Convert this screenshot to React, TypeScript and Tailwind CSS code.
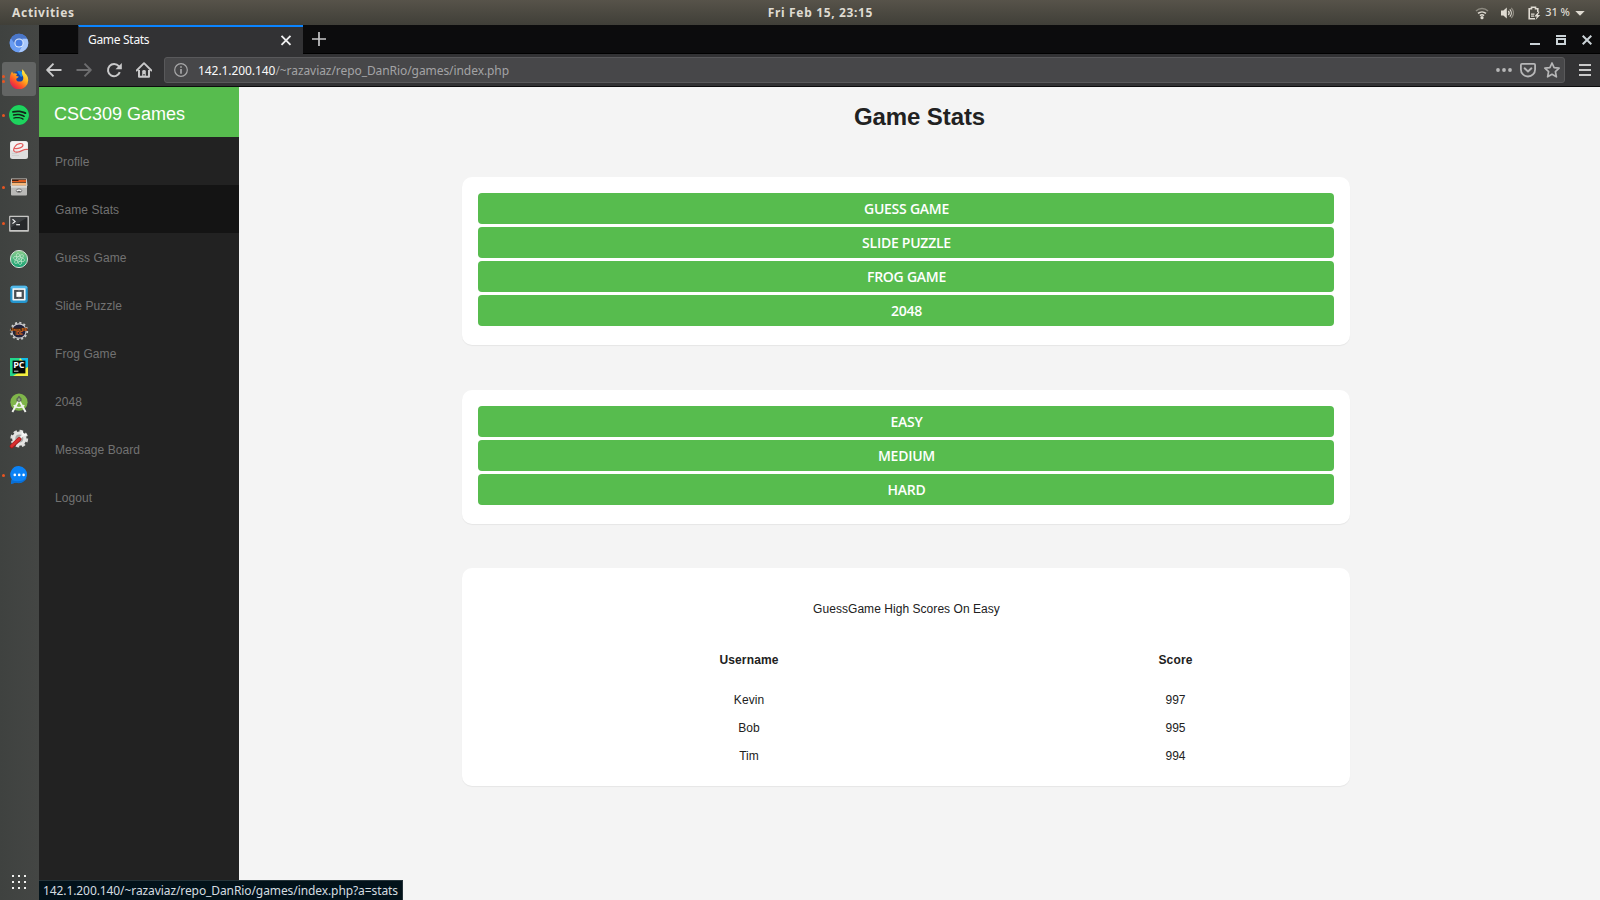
import React from "react";
import { SiSpotify } from "react-icons/si";

type IconProps = { children: React.ReactNode; size?: number; box?: number };

function Glyph({ children, size = 20, box = 20 }: IconProps) {
  return (
    <svg width={size} height={size} viewBox={`0 0 ${box} ${box}`} fill="none" className="block shrink-0">
      {children}
    </svg>
  );
}

const Chromium = () => (
  <Glyph>
    <circle cx="10" cy="10" r="9.3" fill="#5c8fe8" />
    <path d="M1.9 5.4A9.3 9.3 0 0 1 18.2 5.7H10L6 11.5Z" fill="#4a76c8" />
    <path d="M18.2 5.7A9.3 9.3 0 0 1 9.6 19.3L13.8 12L13.5 5.7Z" fill="#a9c8fb" />
    <path d="M1.9 5.4A9.3 9.3 0 0 0 9.6 19.3L13 12.5L6.5 12Z" fill="#6a9df2" />
    <circle cx="10" cy="10" r="4.6" fill="#e4eefc" />
    <circle cx="10" cy="10" r="3.6" fill="#4a80e4" />
  </Glyph>
);

const Firefox = () => (
  <Glyph>
    <defs>
      <linearGradient id="fox" x1="17" y1="2" x2="4" y2="18" gradientUnits="userSpaceOnUse">
        <stop offset="0" stopColor="#fff14a" />
        <stop offset=".4" stopColor="#ffb01c" />
        <stop offset=".7" stopColor="#ff5a25" />
        <stop offset="1" stopColor="#e4204e" />
      </linearGradient>
    </defs>
    <circle cx="10.2" cy="9.5" r="7.4" fill="#1546a8" />
    <path d="M8 2.5C11 1 15 3 15.5 6L12 8Z" fill="#1d8be8" />
    <path
      d="M13 .3C14.8 1.5 15.8 3 16 4.2C17.4 5.2 19.3 7.5 19.2 11A9.2 9.2 0 0 1 .8 11.3C.6 8 1.4 5 3 2.5L4.2 4.6C5.5 4.1 7 4.3 8.3 5C7.6 5.6 7.2 6.3 7.2 7L9.7 7.5C9.5 8.8 8 9 7.3 9.7C7 11.3 8.3 12.6 10.2 12.6C13.5 12.8 14.8 10.5 14.1 7.8C13.7 6 12.8 5.5 12.9 3.7C12.9 2.5 13.3 1.4 13 .3Z"
      fill="url(#fox)"
    />
  </Glyph>
);

const Spotify = () => (
  <div className="flex h-5 w-5 items-center justify-center rounded-full bg-[#14241a]">
    <SiSpotify size={20} color="#1ed35e" />
  </div>
);

const Evince = () => (
  <Glyph>
    <g transform="translate(0 -1)">
      <rect x="1" y="1" width="18" height="18" rx="2.5" fill="#dedede" />
      <rect x="1.5" y="1.5" width="17" height="9" rx="2" fill="#f4f4f4" />
      <path d="M5.5 8.5C9 9 14 7.5 14 5C13.8 2.6 8 3 6 6.5C3.2 10.5 5 12.8 9 12C13 11.2 15 8.6 19 9.5" stroke="#e35b5b" strokeWidth="1.2" />
      <path d="M3 15.5H10M3 13.5H8" stroke="#cfcfcf" />
    </g>
  </Glyph>
);

const Files = () => (
  <Glyph>
    <path d="M2.2 1.5H17.8L18.5 9H1.5Z" fill="#cfcac4" />
    <rect x="3" y="2.3" width="14" height="6.5" fill="#3b1d10" />
    <path d="M3 4H9L10 3H17V5H3Z" fill="#df5b1d" />
    <path d="M3 5.7H17V8.8H3Z" fill="#f5b77a" />
    <rect x="2" y="8.7" width="16" height="9.8" rx="1" fill="#b9b9b7" />
    <rect x="2" y="8.7" width="16" height="2" fill="#dadad8" />
    <ellipse cx="10" cy="13.7" rx="2.8" ry="1.8" fill="#ededed" stroke="#696969" strokeWidth=".8" />
    <path d="M8.4 14.5H11.6" stroke="#555" strokeWidth="1.1" />
  </Glyph>
);

const Terminal = () => (
  <Glyph>
    <g transform="translate(0 .8)">
      <rect x=".1" y="2" width="19.8" height="16" rx=".8" fill="#c6c6c4" />
      <rect x="1.5" y="3.4" width="17" height="12.8" fill="#26282a" />
      <path d="M1.5 3.4H18.5L1.5 14Z" fill="#3c3f41" />
      <path d="M3.5 5.4L6.1 7.6L3.5 9.8" stroke="#f0f0f0" strokeWidth="1.2" />
      <path d="M7.2 10.9H11" stroke="#f0f0f0" strokeWidth="1.2" />
    </g>
  </Glyph>
);

const Atom = () => (
  <Glyph>
    <defs>
      <linearGradient id="atom" x1="0" y1="1" x2="0" y2="19" gradientUnits="userSpaceOnUse">
        <stop stopColor="#8fce8d" />
        <stop offset="1" stopColor="#0f9f72" />
      </linearGradient>
    </defs>
    <circle cx="10" cy="10" r="8.6" fill="url(#atom)" stroke="#d3e0d7" strokeWidth="1" />
    <g stroke="#c5e8cf" strokeWidth=".7">
      <ellipse cx="10" cy="10" rx="5.8" ry="2.2" transform="rotate(15 10 10)" />
      <ellipse cx="10" cy="10" rx="5.8" ry="2.2" transform="rotate(75 10 10)" />
      <ellipse cx="10" cy="10" rx="5.8" ry="2.2" transform="rotate(135 10 10)" />
    </g>
    <circle cx="10" cy="10" r=".8" fill="#e5f6ea" />
  </Glyph>
);

const Brackets = () => (
  <Glyph>
    <g transform="translate(0 -.7)">
      <rect x="1.2" y="1.4" width="17.6" height="17.2" rx="3.2" fill="#2496cf" />
      <rect x="1.8" y="1.4" width="16.4" height="3" rx="1.5" fill="#53b9e9" />
      <rect x="3.4" y="4" width="13.2" height="12.2" rx=".8" fill="#f2f4f5" />
      <rect x="5.1" y="5.6" width="9.8" height="9" fill="#484d52" />
      <rect x="7.4" y="7.6" width="5.2" height="5" fill="#fff" />
      <path d="M10 5.6V7.6M10 12.6V14.6" stroke="#7b8085" />
    </g>
  </Glyph>
);

const EclipseIde = () => (
  <Glyph>
    <circle cx="10" cy="10" r="8.3" stroke="#cfcfcf" strokeWidth="1.7" strokeDasharray="2.1 2.25" />
    <circle cx="10" cy="10" r="7.1" fill="#24233b" stroke="#c9c9cb" strokeWidth="1.1" />
    <rect x="1.5" y="6.8" width="17" height="3" fill="#3f2516" />
    <text x="10" y="9.7" textAnchor="middle" fontFamily="Liberation Sans, sans-serif" fontWeight="700" fontSize="4.3" fill="#d96c18">Java EE</text>
    <text x="10" y="14.3" textAnchor="middle" fontFamily="Liberation Sans, sans-serif" fontWeight="700" fontSize="4.6" fill="#d96c18">IDE</text>
  </Glyph>
);

const PyCharm = () => (
  <Glyph>
    <rect x="1" y="1" width="18" height="18" fill="#22d78c" />
    <path d="M11 1H19V11L14 9Z" fill="#10bfe8" />
    <path d="M11 1L14 4H10Z" fill="#f2ee54" />
    <path d="M19 10V19H4L14 13Z" fill="#f4ef3f" />
    <rect x="3.6" y="3.6" width="12.8" height="12.8" fill="#070907" />
    <text x="4.2" y="10.8" fontFamily="Open Sans, sans-serif" fontWeight="700" fontSize="9" fill="#fff">PC</text>
    <path d="M5 14.2H9.4" stroke="#eee" strokeWidth=".9" />
  </Glyph>
);

const AndroidStudio = () => (
  <Glyph>
    <circle cx="10" cy="9.2" r="8.6" fill="#7fb54a" />
    <circle cx="10" cy="6.6" r="2" fill="#8ea880" stroke="#5b6457" strokeWidth="1.3" />
    <path d="M10 3V4.5" stroke="#5b6457" strokeWidth="1.5" />
    <path d="M9.2 8.6L3.4 19M10.8 8.6L16.6 19" stroke="#f1f3ef" strokeWidth="1.9" />
    <path d="M4.7 12.2C7.5 15.4 12.5 15.4 15.3 12.2" stroke="#f1f3ef" strokeWidth="1.4" />
  </Glyph>
);

const Settings = () => (
  <Glyph>
    <circle cx="10.3" cy="9.6" r="7.7" stroke="#dcdcda" strokeWidth="2.4" strokeDasharray="3.4 2.65" />
    <circle cx="10.3" cy="9.6" r="5.6" fill="#a9a9a7" stroke="#e4e4e2" strokeWidth="3.2" />
    <path d="M10.5 9.5L15 5.2" stroke="#f3f3f3" strokeWidth="2" />
    <path d="M13.4 2.4C13 4.5 14 6.5 17.6 5.6" stroke="#fafafa" strokeWidth="1.7" />
    <path d="M2.8 17.2L10.2 10.2" stroke="#9d1717" strokeWidth="4.2" strokeLinecap="round" />
    <path d="M2.8 17L10.2 10" stroke="#d62f30" strokeWidth="3" strokeLinecap="round" />
  </Glyph>
);

const Messenger = () => (
  <Glyph>
    <path d="M10 1A8.5 8.5 0 1 1 7 17.6C5.3 18 4 18.5 2 18.7L2.7 14.2A8.5 8.5 0 0 1 10 1Z" fill="#0b82f5" />
    <path d="M18 12.5A8.5 8.5 0 0 1 7 17.6L2 18.7L2.6 15C8 17.5 14 16.5 18 12.5Z" fill="#086ed6" />
    <g fill="#fff">
      <circle cx="5.8" cy="9.9" r="1.3" />
      <circle cx="10.2" cy="9.9" r="1.3" />
      <circle cx="14.6" cy="9.9" r="1.3" />
    </g>
  </Glyph>
);

const dock = [
  { id: "chromium", icon: <Chromium />, windows: 0 },
  { id: "firefox", icon: <Firefox />, windows: 2 },
  { id: "spotify", icon: <Spotify />, windows: 1 },
  { id: "evince", icon: <Evince />, windows: 0 },
  { id: "files", icon: <Files />, windows: 1 },
  { id: "terminal", icon: <Terminal />, windows: 1 },
  { id: "atom", icon: <Atom />, windows: 0 },
  { id: "brackets", icon: <Brackets />, windows: 0 },
  { id: "eclipse", icon: <EclipseIde />, windows: 0 },
  { id: "pycharm", icon: <PyCharm />, windows: 0 },
  { id: "android", icon: <AndroidStudio />, windows: 0 },
  { id: "settings", icon: <Settings />, windows: 0 },
  { id: "messenger", icon: <Messenger />, windows: 1 },
];

function Dock() {
  return (
    <aside className="flex w-[39px] shrink-0 flex-col justify-between bg-linear-to-r from-[#3f4240] to-[#444644]">
      <ul className="flex flex-col gap-[2px] pt-px">
        {dock.map((app) => (
          <li key={app.id} className="flex h-[34px] w-[39px] items-center pl-[2px]">
            <span
              className={
                app.id === "firefox"
                  ? "relative flex h-[34px] w-[34px] items-center justify-center rounded-[3px] bg-[#636564]"
                  : "relative flex h-[34px] w-[34px] items-center justify-center"
              }
            >
              {app.icon}
              <span className="absolute top-0 left-0 flex h-full w-[3px] flex-col items-center justify-center gap-[2px]">
                {Array.from({ length: app.windows }, (_, i) => (
                  <i key={i} className="block h-[3px] w-[3px] rounded-full bg-[#e95420]" />
                ))}
              </span>
            </span>
          </li>
        ))}
      </ul>
      <div className="grid w-[38px] grid-cols-[2px_2px_2px] justify-center gap-1 pb-[11px]">
        {Array.from({ length: 9 }, (_, i) => (
          <i key={i} className="block h-[2px] w-[2px] bg-[#f2f2f0]" />
        ))}
      </div>
    </aside>
  );
}

function TopBar() {
  return (
    <header className="grid h-[25px] shrink-0 grid-cols-3 items-center bg-linear-to-b from-[#57534a] to-[#403f38] font-['Noto_Sans',sans-serif] text-[12px] font-bold text-[#dfdbd2]">
      <span className="pl-3 tracking-[0.7px]">Activities</span>
      <span className="pl-[41px] text-center tracking-[0.65px]">Fri Feb 15, 23:15</span>
      <div className="flex items-center justify-end pr-[15px]">
        <Glyph size={14} box={14}>
          <path d="M1 5C4.5 1.8 9.5 1.8 13 5" stroke="#8d8a80" strokeWidth="1.5" />
          <path d="M3 7.4C5.3 5.4 8.7 5.4 11 7.4" stroke="#dfdbd2" strokeWidth="1.5" />
          <path d="M4.9 9.6C6.1 8.6 7.9 8.6 9.1 9.6" stroke="#dfdbd2" strokeWidth="1.4" />
          <circle cx="7" cy="11.7" r="1.6" fill="#dfdbd2" />
        </Glyph>
        <span className="w-[11px]" />
        <Glyph size={14} box={14}>
          <path d="M1 4.6H3.4L6.8 1.5V12.5L3.4 9.4H1Z" fill="#dfdbd2" />
          <path d="M8.3 5C9.4 6.2 9.4 7.8 8.3 9" stroke="#dfdbd2" strokeWidth="1.3" />
          <path d="M9.8 3.3C11.8 5.4 11.8 8.6 9.8 10.7" stroke="#dfdbd2" strokeWidth="1.2" />
          <path d="M11.3 1.8C14 5 14 9 11.3 12.2" stroke="#8d8a80" strokeWidth="1.2" />
        </Glyph>
        <span className="w-[13px]" />
        <Glyph size={14} box={14}>
          <path d="M8 12.7H2.2V2.8H4.5V1.3H8.5V2.8H10.8V6" stroke="#dfdbd2" strokeWidth="1.6" />
          <path d="M4 8.2H7.5M4 10.2H7" stroke="#dfdbd2" strokeWidth="1.2" />
          <path d="M11.5 5.8L7.3 10.4H9.8L8.5 13.9L13.3 9H10.8L12.6 5.8Z" fill="#dfdbd2" />
        </Glyph>
        <span className="w-[4px]" />
        <span className="text-[11px] font-medium">31 %</span>
        <span className="w-[5px]" />
        <Glyph size={10} box={10}>
          <path d="M.3 3H9.7L5 7.8Z" fill="#dfdbd2" />
        </Glyph>
      </div>
    </header>
  );
}

function TabStrip() {
  return (
    <div className="flex h-[29px] shrink-0 border-b border-black bg-[#0c0c0d]">
      <div className="w-[39px] shrink-0" />
      <div className="-mb-px flex w-[225px] shrink-0 items-center justify-between border-t-2 border-l border-t-[#0a84ff] border-l-[#2a2a2c] bg-[#323234] pr-[11px] pl-[9px]">
        <span className="pb-[2px] font-['Noto_Sans',sans-serif] text-[12px] tracking-[-0.3px] text-[#f9f9fa]">Game Stats</span>
        <Glyph size={12} box={12}>
          <path d="M1.5 .8L10.5 9.8M10.5 .8L1.5 9.8" stroke="#f0f0f1" strokeWidth="1.9" />
        </Glyph>
      </div>
      <div className="flex w-8 items-center justify-center">
        <Glyph size={14} box={14}>
          <path d="M7 0V14M0 7H14" stroke="#c6c6c7" strokeWidth="1.7" />
        </Glyph>
      </div>
      <div className="ml-auto flex items-center gap-4 pt-[2px] pr-2">
        <Glyph size={10} box={10}>
          <path d="M0 9H10" stroke="#cbd3d7" strokeWidth="2" />
        </Glyph>
        <Glyph size={10} box={10}>
          <path d="M0 1H10" stroke="#cbd3d7" strokeWidth="2" />
          <path d="M1 4H9V9H1Z" stroke="#cbd3d7" strokeWidth="2" />
        </Glyph>
        <Glyph size={10} box={10}>
          <path d="M.7 .7L9.3 9.3M9.3 .7L.7 9.3" stroke="#cbd3d7" strokeWidth="2" />
        </Glyph>
      </div>
    </div>
  );
}

function Toolbar() {
  return (
    <div className="flex h-[33px] shrink-0 items-center border-b border-[#0c0c0d] bg-[#323234] pl-[7px]">
      <div className="flex items-center gap-[14px]">
        <Glyph size={16} box={16}>
          <path d="M15.5 8H1.5M7.5 1.7L1.2 8L7.5 14.3" stroke="#c9c9ca" strokeWidth="1.9" strokeLinejoin="round" />
        </Glyph>
        <Glyph size={16} box={16}>
          <path d="M.5 8H14.5M8.5 1.7L14.8 8L8.5 14.3" stroke="#6d6d6f" strokeWidth="1.9" strokeLinejoin="round" />
        </Glyph>
        <Glyph size={16} box={16}>
          <path d="M13.8 10.2A6.1 6.1 0 1 1 12.8 4.2L14 5.8" stroke="#c9c9ca" strokeWidth="2" />
          <path d="M15.8 .9V7.2H9.5Z" fill="#c9c9ca" />
        </Glyph>
        <Glyph size={16} box={16}>
          <path d="M.6 8.6L8 1.2L15.4 8.6" stroke="#c9c9ca" strokeWidth="1.9" strokeLinejoin="round" strokeLinecap="round" />
          <path d="M3 8V14.8H13V8" stroke="#c9c9ca" strokeWidth="2" strokeLinejoin="round" />
          <path d="M6.2 15V9.2Q6.2 8 8 8T9.8 9.2V15Z" fill="#c9c9ca" />
          <path d="M8 12V13.6" stroke="#323234" strokeWidth="1.3" />
        </Glyph>
      </div>
      <div className="ml-[12px] flex h-[26px] flex-1 items-center rounded-[3px] border border-[#59595b] bg-[#474749] pr-[4px] pl-[9px]">
        <Glyph size={14} box={14}>
          <circle cx="7" cy="7" r="6.3" stroke="#a8a8a9" strokeWidth="1.2" />
          <path d="M7 6V10.7M7 3.2V4.8" stroke="#b1b1b2" strokeWidth="1.5" />
        </Glyph>
        <span className="ml-[10px] pt-px font-['Noto_Sans',sans-serif] text-[12px] tracking-[-0.07px] text-[#a3a3a5]">
          <span className="text-[#f9f9fa]">142.1.200.140</span>/~razaviaz/repo_DanRio/games/index.php
        </span>
        <div className="ml-auto flex items-center gap-2">
          <Glyph size={16} box={16}>
            <g fill="#b7b7b8">
              <circle cx="2" cy="8" r="1.9" />
              <circle cx="8" cy="8" r="1.9" />
              <circle cx="14" cy="8" r="1.9" />
            </g>
          </Glyph>
          <Glyph size={16} box={16}>
            <path d="M2 1.9H14Q15.1 1.9 15.1 3V7.4A7.1 7.1 0 0 1 .9 7.4V3Q.9 1.9 2 1.9Z" stroke="#b7b7b8" strokeWidth="1.8" />
            <path d="M4.6 6.3L8 9.5L11.4 6.3" stroke="#b7b7b8" strokeWidth="1.9" strokeLinecap="round" strokeLinejoin="round" />
          </Glyph>
          <Glyph size={16} box={16}>
            <path d="M8 1L10.1 5.6L15.1 6.2L11.4 9.7L12.4 14.8L8 12.3L3.6 14.8L4.6 9.7L.9 6.2L5.9 5.6Z" stroke="#b7b7b8" strokeWidth="1.7" strokeLinejoin="round" />
          </Glyph>
        </div>
      </div>
      <div className="flex w-[35px] justify-end pr-[9px]">
        <Glyph size={12} box={12}>
          <path d="M0 1H12M0 6H12M0 11H12" stroke="#c9c9ca" strokeWidth="1.9" />
        </Glyph>
      </div>
    </div>
  );
}

const navItems = ["Profile", "Game Stats", "Guess Game", "Slide Puzzle", "Frog Game", "2048", "Message Board", "Logout"];

function Sidebar() {
  return (
    <nav className="flex w-[200px] shrink-0 flex-col bg-[#222222]">
      <h2 className="flex h-[50px] items-center bg-[#57bc4e] pt-[5px] pl-[15px] text-[18px] text-white">CSC309 Games</h2>
      {navItems.map((item) => (
        <a
          key={item}
          className={
            item === "Game Stats"
              ? "flex h-12 items-center bg-[#141414] pt-px pl-4 text-[12px] tracking-[0.08px] text-[#727272]"
              : "flex h-12 items-center pt-px pl-4 text-[12px] tracking-[0.08px] text-[#727272]"
          }
        >
          {item}
        </a>
      ))}
    </nav>
  );
}

function ButtonCard({ labels }: { labels: string[] }) {
  return (
    <section className="flex flex-col gap-[3px] rounded-[10px] bg-white px-4 pt-4 pb-[19px] shadow-[0_1px_1px_rgba(0,0,0,0.06)]">
      {labels.map((label) => (
        <button
          key={label}
          className="flex h-[31px] items-center justify-center rounded-[4px] bg-[#57bc4e] pl-px font-['Open_Sans','Noto_Sans',sans-serif] text-[14px] font-semibold tracking-[-0.25px] text-white"
        >
          {label}
        </button>
      ))}
    </section>
  );
}

const scores = [
  { name: "Kevin", score: 997 },
  { name: "Bob", score: 995 },
  { name: "Tim", score: 994 },
];

function ScoreCard() {
  return (
    <section className="h-[218px] rounded-[10px] bg-white px-4 pt-[31px] text-center text-[12px] leading-5 tracking-[0.05px] text-[#212121] shadow-[0_1px_1px_rgba(0,0,0,0.06)]">
      <p className="pl-px">GuessGame High Scores On Easy</p>
      <div className="mt-[31px] grid grid-cols-[542px_311px] gap-x-0">
        <strong className="mb-5 tracking-[0.15px]">Username</strong>
        <strong className="mb-5 tracking-[0.15px]">Score</strong>
        {scores.map((row) => (
          <React.Fragment key={row.name}>
            <span className="h-7">{row.name}</span>
            <span className="h-7">{row.score}</span>
          </React.Fragment>
        ))}
      </div>
    </section>
  );
}

export default function App() {
  return (
    <div className="relative flex h-[900px] w-[1600px] flex-col overflow-hidden font-['Liberation_Sans',sans-serif]">
      <TopBar />
      <div className="flex min-h-0 flex-1">
        <Dock />
        <div className="flex min-w-0 flex-1 flex-col">
          <TabStrip />
          <Toolbar />
          <div className="flex min-h-0 flex-1">
            <Sidebar />
            <main className="flex-1 bg-[#f4f4f4]">
              <h1 className="h-[90px] pt-[15px] text-center text-[24px] leading-[30px] font-bold tracking-[-0.1px] text-[#212121]">Game Stats</h1>
              <div className="ml-[223px] flex w-[888px] flex-col">
                <ButtonCard labels={["GUESS GAME", "SLIDE PUZZLE", "FROG GAME", "2048"]} />
                <div className="h-[45px]" />
                <ButtonCard labels={["EASY", "MEDIUM", "HARD"]} />
                <div className="h-[44px]" />
                <ScoreCard />
              </div>
            </main>
          </div>
        </div>
      </div>
      <div className="absolute bottom-0 left-[39px] flex h-5 w-[364px] items-center border-t border-r border-[#26343a] bg-[#02121a] pl-[4px] font-['Noto_Sans',sans-serif] text-[12px] tracking-[-0.09px] whitespace-nowrap text-[#d5dde0]">
        142.1.200.140/~razaviaz/repo_DanRio/games/index.php?a=stats
      </div>
    </div>
  );
}
